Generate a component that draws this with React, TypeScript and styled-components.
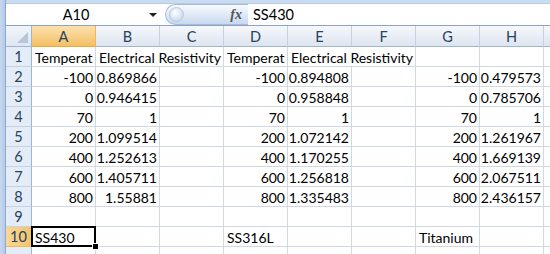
import styled, { createGlobalStyle } from 'styled-components';

type Cell = { text?: string; align?: 'left' | 'right'; span?: number; selected?: boolean };

const GlobalStyle = createGlobalStyle`
  html, body {
    margin: 0;
    padding: 0;
    background: #ffffff;
  }
`;

const Window = styled.div`
  width: 550px;
  height: 254px;
  overflow: hidden;
  display: flex;
  font-family: 'Lato', 'Open Sans', sans-serif;
  background: #c9dbf0;
`;

const Frame = styled.div`
  width: 5px;
  flex: none;
  background: linear-gradient(to right, #c7d9ef, #b4cae6);
  border-right: 1px solid #8ea9cd;
`;

const Workspace = styled.div`
  flex: 1;
  min-width: 0;
  display: flex;
  flex-direction: column;
`;

const FormulaBar = styled.div`
  height: 23px;
  margin-top: 3px;
  display: flex;
  align-items: center;
  background: #ffffff;
  border-top: 1px solid #b7cbe4;
  border-bottom: 1px solid #8ba4c6;
`;

const NameBox = styled.div`
  width: 140px;
  text-align: center;
  font-size: 14.5px;
  color: #000;
`;

const DropArrow = styled.div`
  width: 14px;
  display: flex;
  justify-content: center;
  &::after {
    content: '';
    border-left: 4px solid transparent;
    border-right: 4px solid transparent;
    border-top: 4px solid #222;
  }
`;

const Splitter = styled.div`
  margin-left: 5px;
  width: 83px;
  height: 21px;
  display: flex;
  align-items: center;
  justify-content: space-between;
  padding: 0 6px 0 3px;
  box-sizing: border-box;
  border-radius: 11px 0 0 11px;
  background: linear-gradient(to bottom, #f7fafe, #e3ecf7 45%, #c8d8ee);
  border: 1px solid #a5bcdb;
  border-right: none;
`;

const Grip = styled.div`
  width: 13px;
  height: 13px;
  border-radius: 50%;
  background: radial-gradient(circle at 40% 35%, #ffffff, #cfdcee 70%);
  border: 1px solid #b5c8e2;
`;

const Fx = styled.span`
  font-family: 'Liberation Serif', serif;
  font-style: italic;
  font-weight: bold;
  font-size: 14px;
  color: #555;
`;

const FormulaText = styled.div`
  padding-left: 5px;
  font-size: 14.5px;
  color: #000;
`;

const Gap = styled.div`
  height: 3px;
  background: #dce6f3;
`;

const Sheet = styled.div`
  flex: 1;
  display: grid;
  grid-template-columns: 26px repeat(9, 64px);
  grid-template-rows: 21px;
  grid-auto-rows: 20px;
  background: #ffffff;
  font-size: 14px;
`;

const Corner = styled.div`
  box-sizing: border-box;
  background: linear-gradient(to bottom, #f2f5fa, #dfe6f0);
  border-right: 1px solid #9eb6ce;
  border-bottom: 1px solid #9eb6ce;
  display: flex;
  align-items: flex-end;
  justify-content: flex-end;
  padding: 0 3px 3px 0;
`;

const ColHeader = styled.div<{ $active?: boolean }>`
  box-sizing: border-box;
  display: flex;
  align-items: center;
  justify-content: center;
  color: #27415f;
  font-size: 14.5px;
  background: ${(p) =>
    p.$active
      ? 'linear-gradient(to bottom, #fbe0ac, #f8d18c 50%, #f2bf63)'
      : 'linear-gradient(to bottom, #f6f8fc, #e9eef5 50%, #dde5ef)'};
  border-right: 1px solid ${(p) => (p.$active ? '#f2b755' : '#c5d2e2')};
  border-bottom: 1px solid ${(p) => (p.$active ? '#f2a93d' : '#9eb6ce')};
`;

const RowHeader = styled.div<{ $active?: boolean }>`
  box-sizing: border-box;
  display: flex;
  align-items: center;
  justify-content: center;
  color: #27415f;
  font-size: 14.5px;
  background: ${(p) => (p.$active ? 'linear-gradient(to right, #f9d898, #f4c36b)' : '#e4ecf7')};
  border-right: 1px solid ${(p) => (p.$active ? '#f2a93d' : '#9eb6ce')};
  border-bottom: 1px solid ${(p) => (p.$active ? '#f2b755' : '#c5d2e2')};
`;

const DataCell = styled.div<{ $align?: 'left' | 'right'; $span?: number; $selected?: boolean }>`
  box-sizing: border-box;
  position: relative;
  grid-column: span ${(p) => p.$span ?? 1};
  display: flex;
  align-items: center;
  justify-content: ${(p) => (p.$align === 'right' ? 'flex-end' : 'flex-start')};
  padding: 1px 2px 0 3px;
  white-space: nowrap;
  overflow: hidden;
  color: #000;
  border-right: 1px solid #d0d7e5;
  border-bottom: 1px solid #d0d7e5;
  ${(p) =>
    p.$selected &&
    `
    overflow: visible;
    &::after {
      content: '';
      position: absolute;
      left: -1px;
      top: -1px;
      right: -1px;
      bottom: -1px;
      border: 2px solid #000;
      pointer-events: none;
    }
    &::before {
      content: '';
      position: absolute;
      right: -4px;
      bottom: -4px;
      width: 5px;
      height: 5px;
      background: #000;
      border: 1px solid #fff;
      z-index: 1;
    }
  `}
`;

const columns = ['A', 'B', 'C', 'D', 'E', 'F', 'G', 'H', ''];

const values: [string, string, string, string][] = [
  ['-100', '0.869866', '0.894808', '0.479573'],
  ['0', '0.946415', '0.958848', '0.785706'],
  ['70', '1', '1', '1'],
  ['200', '1.099514', '1.072142', '1.261967'],
  ['400', '1.252613', '1.170255', '1.669139'],
  ['600', '1.405711', '1.256818', '2.067511'],
  ['800', '1.55881', '1.335483', '2.436157'],
];

const blank = (n: number): Cell[] => Array.from({ length: n }, () => ({}));

const rows: Cell[][] = [
  [
    { text: 'Temperat' },
    { text: 'Electrical Resistivity', span: 2 },
    { text: 'Temperat' },
    { text: 'Electrical Resistivity', span: 2 },
    {},
    {},
    {},
  ],
  ...values.map(([t, a, b, c]) => [
    { text: t, align: 'right' as const },
    { text: a, align: 'right' as const },
    {},
    { text: t, align: 'right' as const },
    { text: b, align: 'right' as const },
    {},
    { text: t, align: 'right' as const },
    { text: c, align: 'right' as const },
    {},
  ]),
  blank(9),
  [
    { text: 'SS430', selected: true },
    {},
    {},
    { text: 'SS316L' },
    {},
    {},
    { text: 'Titanium' },
    {},
    {},
  ],
  blank(9),
];

export default function App() {
  return (
    <>
      <GlobalStyle />
      <Window>
        <Frame />
        <Workspace>
          <FormulaBar>
            <NameBox>A10</NameBox>
            <DropArrow />
            <Splitter>
              <Grip />
              <Fx>fx</Fx>
            </Splitter>
            <FormulaText>SS430</FormulaText>
          </FormulaBar>
          <Gap />
          <Sheet>
            <Corner>
              <svg width="11" height="11" viewBox="0 0 11 11">
                <path d="M11 0 L11 11 L0 11 Z" fill="#b6c5d8" />
              </svg>
            </Corner>
            {columns.map((c, i) => (
              <ColHeader key={i} $active={c === 'A'}>
                {c}
              </ColHeader>
            ))}
            {rows.map((row, r) => [
              <RowHeader key={`h${r}`} $active={r === 9}>
                {r < 10 ? r + 1 : ''}
              </RowHeader>,
              ...row.map((cell, c) => (
                <DataCell
                  key={`${r}-${c}`}
                  $align={cell.align}
                  $span={cell.span}
                  $selected={cell.selected}
                >
                  {cell.text}
                </DataCell>
              )),
            ])}
          </Sheet>
        </Workspace>
      </Window>
    </>
  );
}
